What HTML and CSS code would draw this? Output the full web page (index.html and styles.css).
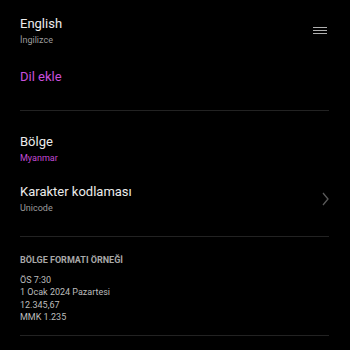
FILE: index.html
```html
<!DOCTYPE html>
<html lang="tr">
<head>
<meta charset="utf-8">
<link rel="stylesheet" href="styles.css">
</head>
<body>
<div class="page">
  <div class="lang-row">
    <div class="lang-text">
      <div class="title">English</div>
      <div class="sub">İngilizce</div>
    </div>
    <svg class="handle" width="14" height="7" viewBox="0 0 14 7">
      <rect x="0" y="0" width="14" height="1" fill="#b0b0b0"/>
      <rect x="0" y="3" width="14" height="1" fill="#b0b0b0"/>
      <rect x="0" y="6" width="14" height="1" fill="#b0b0b0"/>
    </svg>
  </div>
  <div class="add">Dil ekle</div>
  <div class="divider d1"></div>
  <div class="item region">
    <div class="title">Bölge</div>
    <div class="sub accent">Myanmar</div>
  </div>
  <div class="item enc">
    <div class="item-text">
      <div class="title">Karakter kodlaması</div>
      <div class="sub">Unicode</div>
    </div>
    <svg class="chev" width="7" height="14" viewBox="0 0 7 14">
      <path d="M1 1 L6 7 L1 13" fill="none" stroke="#5a5a5a" stroke-width="1.3"/>
    </svg>
  </div>
  <div class="divider d2"></div>
  <div class="sample">
    <div class="heading">BÖLGE FORMATI ÖRNEĞİ</div>
    <div class="lines">
      <div>ÖS 7:30</div>
      <div>1 Ocak 2024 Pazartesi</div>
      <div>12.345,67</div>
      <div>MMK 1.235</div>
    </div>
  </div>
  <div class="divider d3"></div>
</div>
</body>
</html>
```

FILE: styles.css
```css
html, body {
  margin: 0;
  padding: 0;
  background: #000;
}
body {
  width: 350px;
  height: 350px;
  overflow: hidden;
  font-family: Roboto, "Noto Sans", sans-serif;
  color: #ececec;
}
.page {
  padding: 16px 21px 0 20px;
}
.title {
  font-size: 13px;
  line-height: 16px;
  color: #ececec;
}
.sub {
  font-size: 9px;
  line-height: 12px;
  margin-top: 2px;
  color: #9c9c9c;
}
.accent {
  color: #c24ad4;
}
.lang-row {
  display: flex;
  justify-content: space-between;
  align-items: flex-start;
}
.handle {
  margin-top: 11px;
  margin-right: 2px;
}
.add {
  margin-top: 23px;
  font-size: 13px;
  line-height: 16px;
  color: #c94fdc;
}
.divider {
  height: 1px;
  background: #222;
}
.d1 {
  margin-top: 25px;
}
.region {
  margin-top: 23px;
}
.enc {
  margin-top: 20px;
  display: flex;
  justify-content: space-between;
  align-items: center;
}
.d2 {
  margin-top: 22px;
}
.sample {
  padding-top: 18px;
}
.heading {
  font-size: 9px;
  line-height: 11px;
  font-weight: 700;
  color: #a8a8a8;
}
.lines {
  margin-top: 8px;
  font-size: 9px;
  line-height: 12.4px;
  color: #bcbcbc;
}
.d3 {
  margin-top: 11px;
}
```
